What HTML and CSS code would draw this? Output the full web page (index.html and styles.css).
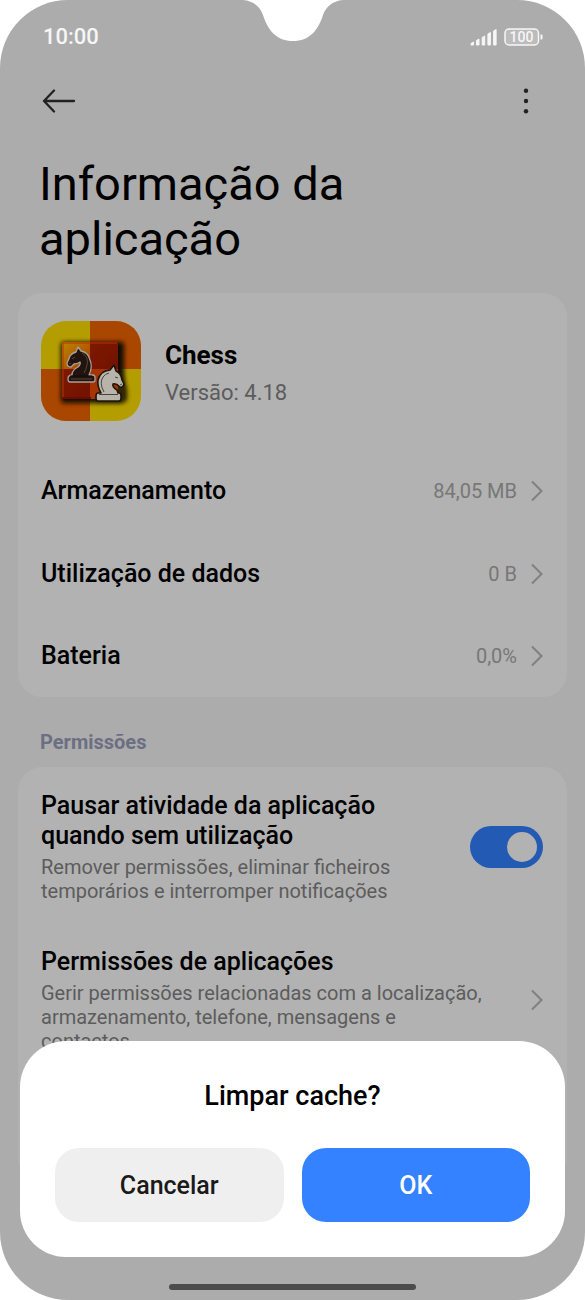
FILE: index.html
```html
<!DOCTYPE html>
<html lang="pt">
	<head>
		<meta charset="utf-8">
		<meta name="viewport" content="width=device-width, initial-scale=1">
		<title>Informação da aplicação</title>
		<link rel="stylesheet" href="styles.css">
	</head>
	<body>

		<div class="phone">

			<svg class="notch" width="100" height="41" viewBox="0 0 100 41" aria-hidden="true">
				<path d="M0 0C11 1 17 7 20 15C25 31 34 41 50 41C66 41 75 31 80 15C83 7 89 1 100 0Z" fill="#fff"/>
			</svg>

			<div class="statusBar">
				<span class="time">10:00</span>
				<svg width="73" height="20" viewBox="0 0 73 20" aria-label="Bateria 100">
					<g fill="#f6f6f6" stroke="#f6f6f6" stroke-width="1" stroke-linejoin="round">
						<path d="M1 18V16.500L3.500 15V18zM6.500 18V13.500L9 12V18zM12.200 18V10.500L14.700 9V18zM17.900 18V7L20.400 5.500V18zM23.600 18V4L26.100 2.500V18z"/>
					</g>
					<rect x="35" y="2" width="33.500" height="16" rx="4" fill="#bcbcbc" stroke="#f6f6f6" stroke-width="1.500"/>
					<path d="M70.500 7.500h1q1 0 1 1v3q0 1-1 1h-1z" fill="#f6f6f6"/>
					<text class="batteryLevel" x="51.500" y="15" text-anchor="middle">100</text>
				</svg>
			</div>

			<div class="toolbar">
				<button type="button" aria-label="Voltar">
					<svg width="34" height="24" viewBox="0 0 34 24">
						<path d="M12 1.500L2 12L12 22.500M2 12H32" fill="none" stroke="#222" stroke-width="2.300" stroke-linecap="round" stroke-linejoin="round"/>
					</svg>
				</button>
				<button type="button" aria-label="Mais opções">
					<svg width="6" height="26" viewBox="0 0 6 26" fill="#222">
						<circle cx="3" cy="2.700" r="2.200"/>
						<circle cx="3" cy="13" r="2.200"/>
						<circle cx="3" cy="23.300" r="2.200"/>
					</svg>
				</button>
			</div>

			<h1>Informação da aplicação</h1>

			<div class="card">
				<div class="appHeader">
					<svg width="100" height="100" viewBox="0 0 100 100" aria-hidden="true">
						<defs>
							<clipPath id="iconShape"><rect width="100" height="100" rx="25"/></clipPath>
							<filter id="shadow" x="-20%" y="-20%" width="150%" height="150%"><feGaussianBlur stdDeviation="2"/></filter>
							<linearGradient id="gold" x2="1" y2="1"><stop stop-color="#bc8500"/><stop offset="1" stop-color="#a93c00"/></linearGradient>
							<linearGradient id="red" x2="1" y2="1"><stop stop-color="#861b00"/><stop offset="1" stop-color="#691000"/></linearGradient>
						</defs>
						<g clip-path="url(#iconShape)">
							<rect width="100" height="100" fill="#b39d00"/>
							<path d="M49 0H100V48H49zM0 48H49V100H0z" fill="#a94600"/>
							<rect x="20" y="21" width="63" height="61" rx="3" fill="#160b00" filter="url(#shadow)"/>
							<path d="M56 80H86V68L80 52z" fill="#302600" filter="url(#shadow)"/>
							<rect x="21" y="21" width="56" height="57" rx="2" fill="url(#red)"/>
							<path d="M21 23q0-2 2-2H49V48H21z" fill="url(#gold)"/>
							<path d="M49 48H77V78H49z" fill="#a53400"/>
							<path d="M22 76V22H76" fill="none" stroke="#b23600" stroke-width="1"/>
							<path d="M22 77H50" stroke="#6b0c00" stroke-width="2"/>
						</g>
						<!-- black knight -->
						<path d="M31 54Q31 49 37 46Q40 43 39 41Q36 43 33 43L30 46Q26 46 26 42Q28 38 29 35Q31 32 35 31L37 26L40 30Q47 31 49 39Q52 46 48 54H52Q54 54 54 57V59Q54 61 52 61H29Q27 61 27 58Q27 54 31 54z" fill="#21130e" stroke="#a9a09b" stroke-width="1.300" stroke-linejoin="round"/>
						<path d="M41 32Q48 36 46 44Q45 49 43 52M31 38L34 36M28 43L30 42M30 58H51" fill="none" stroke="#5b4438" stroke-width="1"/>
						<path d="M29 55H51" stroke="#100a08" stroke-width="1"/>
						<!-- white knight -->
						<path d="M60 72Q56 65 57 59Q59 50 69 49L73 44L75 50Q80 52 81 59L83 63Q82 67 79 66Q75 62 72 63Q71 66 76 69L77 72H78Q80 72 80 75V77Q80 80 78 80H57Q55 80 55 77V75Q55 72 57 72z" fill="#b9b4ab" stroke="#1c150c" stroke-width="1.600" stroke-linejoin="round"/>
						<path d="M63 71Q58 62 62 56Q64 53 68 52M74 56L77 57M79 64L81 63M58 73.500H77" fill="none" stroke="#4a4338" stroke-width="1"/>
					</svg>
					<div>
						<div class="appName">Chess</div>
						<div class="appVersion">Versão: 4.18</div>
					</div>
				</div>
				<a class="row" href="#">
					<span class="title">Armazenamento</span>
					<span class="value">84,05 MB</span>
					<svg class="chevron" width="12" height="22" viewBox="0 0 12 22"><path d="M1 1.500L10.500 11L1 20.500"/></svg>
				</a>
				<a class="row" href="#">
					<span class="title">Utilização de dados</span>
					<span class="value">0 B</span>
					<svg class="chevron" width="12" height="22" viewBox="0 0 12 22"><path d="M1 1.500L10.500 11L1 20.500"/></svg>
				</a>
				<a class="row" href="#">
					<span class="title">Bateria</span>
					<span class="value">0,0%</span>
					<svg class="chevron" width="12" height="22" viewBox="0 0 12 22"><path d="M1 1.500L10.500 11L1 20.500"/></svg>
				</a>
			</div>

			<h2>Permissões</h2>

			<div class="card permissions">
				<div class="item">
					<label for="pauseActivity">
						<span class="title">Pausar atividade da aplicação quando sem utilização</span>
						<span class="details">Remover permissões, eliminar ficheiros temporários e interromper notificações</span>
					</label>
					<input class="switch" type="checkbox" id="pauseActivity" checked>
				</div>
				<a class="item" href="#">
					<span class="itemText">
						<span class="title">Permissões de aplicações</span>
						<span class="details">Gerir permissões relacionadas com a localização, armazenamento, telefone, mensagens e contactos</span>
					</span>
					<svg class="chevron" width="12" height="22" viewBox="0 0 12 22"><path d="M1 1.500L10.500 11L1 20.500"/></svg>
				</a>
			</div>

			<div class="bottom">
				<div class="dialog" role="dialog" aria-labelledby="dialogTitle">
					<div class="dialogTitle" id="dialogTitle">Limpar cache?</div>
					<div class="buttons">
						<button type="button">Cancelar</button>
						<button type="button" class="primary">OK</button>
					</div>
				</div>
				<div class="homeBar"></div>
			</div>

		</div>

	</body>
</html>
```

FILE: styles.css
```css
* {
	box-sizing: border-box;
}

body {
	margin: 0;
	background: #fff;
	font-family: Roboto, "Liberation Sans", sans-serif;
	color: #000;
}

svg {
	display: block;
	flex: none;
}

a {
	color: inherit;
	text-decoration: none;
}

button {
	padding: 0;
	border: 0;
	background: none;
	font-family: inherit;
}

.phone {
	position: relative;
	height: 100vh;
	padding: 0 18px;
	overflow: hidden;
	border-radius: 68px;
	background: #acacac;
}

.notch {
	position: absolute;
	top: 0;
	left: calc(50% - 50px);
}

.statusBar {
	display: flex;
	justify-content: space-between;
	align-items: center;
	padding: 24px 24px 0 25px;
	color: #f6f6f6;
}

.time {
	font-size: 22px;
	font-weight: 500;
	line-height: 26px;
}

.batteryLevel {
	fill: #f6f6f6;
	font-size: 14px;
	font-weight: 500;
}

.toolbar {
	display: flex;
	justify-content: space-between;
	align-items: center;
	padding: 38px 38px 0 24px;
}

h1 {
	margin: 42px 150px 27px 21px;
	font-size: 47px;
	font-weight: 400;
	line-height: 55px;
}

h2 {
	margin: 33px 22px 13px;
	font-size: 20px;
	font-weight: 700;
	line-height: 24px;
	color: #6c6f83;
}

.card {
	padding: 28px 24px 0 23px;
	border-radius: 24px;
	background: #b2b2b2;
}

.appHeader {
	display: flex;
	align-items: center;
	gap: 24px;
	margin-bottom: 28px;
}

.appName {
	margin: 5px 0 8px;
	font-size: 26px;
	font-weight: 700;
	line-height: 30px;
}

.appVersion {
	font-size: 22px;
	line-height: 30px;
	color: #5c5c5c;
}

.row {
	display: flex;
	align-items: center;
	height: 83px;
}

.row:last-child {
	height: 82px;
}

.title {
	display: block;
	font-size: 25px;
	font-weight: 500;
	line-height: 30px;
}

.value {
	margin-left: auto;
	margin-right: 14px;
	font-size: 20px;
	color: #777;
}

.chevron {
	fill: none;
	stroke: #808080;
	stroke-width: 2;
}

.permissions {
	padding-top: 24px;
	padding-bottom: 84px;
}

.item {
	display: flex;
	justify-content: space-between;
	align-items: center;
	gap: 44px;
	margin-bottom: 44px;
}

.item label {
	max-width: 380px;
}

.details {
	display: block;
	margin-top: 4px;
	font-size: 20px;
	line-height: 24px;
	color: #5c5c5c;
}

.switch {
	flex: none;
	width: 73px;
	height: 42px;
	margin: 0;
	padding: 6px;
	appearance: none;
	border-radius: 21px;
	background: #235ab3;
}

.switch::before {
	content: "";
	display: block;
	width: 30px;
	height: 30px;
	border-radius: 50%;
	background: #b2b2b2;
}

.switch:checked::before {
	margin-left: auto;
}

/* confirmation sheet lies over the list */
.bottom {
	position: absolute;
	right: 0;
	bottom: 0;
	left: 0;
	padding: 0 20px 10px;
}

.dialog {
	padding: 40px 35px 35px;
	border-radius: 46px;
	background: #fff;
}

.dialogTitle {
	margin-bottom: 37px;
	font-size: 27px;
	font-weight: 500;
	line-height: 30px;
	text-align: center;
}

.buttons {
	display: flex;
	gap: 18px;
}

.buttons button {
	flex: 1;
	height: 74px;
	border-radius: 24px;
	background: #efefef;
	font-size: 25px;
	font-weight: 500;
	color: #1a1a1a;
}

.buttons .primary {
	background: #3482ff;
	color: #fff;
}

.homeBar {
	width: 247px;
	height: 6px;
	margin: 27px auto 0;
	border-radius: 3px;
	background: #4c4c4c;
}
```
